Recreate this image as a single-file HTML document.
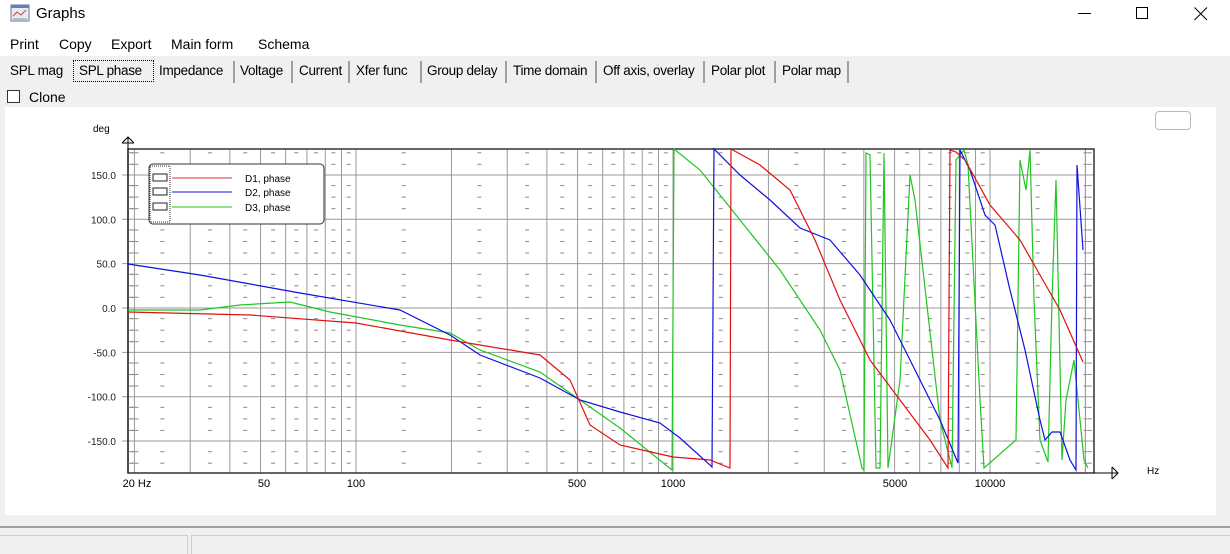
<!DOCTYPE html>
<html><head><meta charset="utf-8"><style>
*{margin:0;padding:0;box-sizing:border-box}
body{width:1230px;height:554px;background:#f0f0f0;font-family:"Liberation Sans",sans-serif;position:relative;overflow:hidden}
.abs{position:absolute}
#title{left:0;top:0;width:1230px;height:30px;background:#fff}
#menu{left:0;top:30px;width:1230px;height:26px;background:#fff;font-size:14px}
#menu span{position:absolute;top:6px}
.tab{position:absolute;top:61px;height:22px;font-size:13.5px;letter-spacing:-0.3px;line-height:20px;padding-left:4px;border-right:2px solid #a0a0a0;color:#000;white-space:nowrap;overflow:hidden}
#panel{left:5px;top:107px;width:1211px;height:408px;background:#fff}
svg text{font-family:"Liberation Sans",sans-serif}
</style></head><body>
<div id="title" class="abs">
 <svg class="abs" style="left:10px;top:4px" width="22" height="20"><rect x="1" y="1" width="18" height="16" fill="#e8ecf4" stroke="#6a7a9a"/><rect x="1" y="1" width="18" height="3" fill="#6080c0"/><path d="M3 12 L7 8 L11 11 L16 6" stroke="#c04040" fill="none"/><path d="M3 15h14" stroke="#888"/></svg>
 <span class="abs" style="left:36px;top:5px;font-size:15px">Graphs</span>
 <div class="abs" style="left:1078px;top:13px;width:13px;height:1px;background:#000"></div>
 <div class="abs" style="left:1136px;top:7px;width:12px;height:12px;border:1px solid #000"></div>
 <svg class="abs" style="left:1194px;top:7px" width="14" height="14"><path d="M0.5 0.5L13 13M13 0.5L0.5 13" stroke="#000"/></svg>
</div>
<div id="menu" class="abs"><span style="left:10px">Print</span><span style="left:59px">Copy</span><span style="left:111px">Export</span><span style="left:171px">Main form</span><span style="left:258px">Schema</span></div>
<div class="tab" style="left:6px;width:66px;border-right:none">SPL mag</div>
<div class="tab" style="left:73px;width:81px;border:1px dotted #000;top:60px;height:22px;padding-left:5px">SPL phase</div>
<div class="tab" style="left:155px;width:80px">Impedance</div>
<div class="tab" style="left:236px;width:57px">Voltage</div>
<div class="tab" style="left:295px;width:55px">Current</div>
<div class="tab" style="left:352px;width:70px">Xfer func</div>
<div class="tab" style="left:423px;width:84px">Group delay</div>
<div class="tab" style="left:509px;width:88px">Time domain</div>
<div class="tab" style="left:599px;width:106px">Off axis, overlay</div>
<div class="tab" style="left:707px;width:69px">Polar plot</div>
<div class="tab" style="left:778px;width:71px">Polar map</div>
<div class="abs" style="left:7px;top:90px;width:13px;height:13px;border:1px solid #333;background:#fff"></div>
<span class="abs" style="left:29px;top:89px;font-size:14px">Clone</span>
<div id="panel" class="abs"></div>
<div class="abs" style="left:1155px;top:111px;width:36px;height:19px;border:1px solid #bbb;border-radius:4px;background:#fff"></div>
<div class="abs" style="left:0;top:526px;width:1230px;height:2px;background:#a0a0a0"></div>
<div class="abs" style="left:0;top:535px;width:188px;height:19px;border-top:1px solid #ccc;border-right:1px solid #ccc"></div>
<div class="abs" style="left:191px;top:535px;width:1039px;height:19px;border-top:1px solid #ccc;border-left:1px solid #ccc"></div>
<svg id="g" class="abs" style="left:0;top:0" width="1230" height="554"></svg>
<script>
var s='',L=128,R=1094,T=149,B=473;
function fx(f){return 356+317*Math.log10(f/100);}
function fy(d){return 308-0.887*d;}
var xs=[];
[10,100,1000,10000].forEach(function(dec){for(var m=1;m<10;m++){var f=dec*m;if(f>=20&&f<=20000)xs.push(fx(f));}});
xs.push(fx(20000));
var cols=[L].concat(xs.filter(function(x){return x>L+3&&x<R-3}),[R]);
var ds=[];for(var b=-200;b<200;b+=50){[12,25,38].forEach(function(o){ds.push(b+o);});}
for(var i=0;i<cols.length-1;i++){var mx=(cols[i]+cols[i+1])/2;ds.forEach(function(d){var y=fy(d);if(y<T+3||y>B-3)return;s+='<line x1="'+(mx-2)+'" x2="'+(mx+2)+'" y1="'+y+'" y2="'+y+'" stroke="#888"/>';});}
ds.forEach(function(d){var y=fy(d);if(y<T+3||y>B-3)return;s+='<line x1="'+(fx(20)-4)+'" x2="'+(fx(20)+4)+'" y1="'+y+'" y2="'+y+'" stroke="#888"/>';});
cols.forEach(function(x){s+='<line x1="'+x+'" x2="'+x+'" y1="'+T+'" y2="'+B+'" stroke="#999"/>';});
for(var d=-150;d<=150;d+=50){var y=fy(d);s+='<line x1="'+(L-6)+'" x2="'+R+'" y1="'+y+'" y2="'+y+'" stroke="#999"/>';s+='<text x="'+(L-12)+'" y="'+(y+4)+'" font-size="10" text-anchor="end" fill="#222">'+d.toFixed(1)+'</text>';}
s+='<rect x="'+L+'" y="'+T+'" width="'+(R-L)+'" height="'+(B-T)+'" fill="none" stroke="#333" stroke-width="1.5"/>';
s+='<path d="M128 473V138M122 143L128 137L134 143M122 143h12" stroke="#000" fill="none"/>';
s+='<path d="M1094 473H1118M1112 467L1118 473L1112 479M1112 467v12" stroke="#000" fill="none"/>';
s+='<text x="93" y="132" font-size="10">deg</text><text x="1147" y="474" font-size="10">Hz</text>';
[['20 Hz',137],['50',264],['100',356],['500',577],['1000',673],['5000',895],['10000',990]].forEach(function(a){s+='<text x="'+a[1]+'" y="487" font-size="11" text-anchor="middle">'+a[0]+'</text>';});
function pl(p,c){s+='<polyline points="'+p+'" fill="none" stroke="'+c+'" stroke-width="1.2"/>';}
pl('128,310 200,310 240,305 290,302 330,312 400,325 450,333 480,350 540,372 580,400 620,428 672,470 674,149 700,170 740,220 780,270 820,330 840,370 862,468 864,470 866,153 870,155 876,468 880,468 884,153 888,468 900,380 910,175 915,200 940,420 952,468 956,160 964,150 968,165 980,400 984,468 1016,440 1020,160 1026,190 1030,150 1034,300 1040,440 1048,462 1052,300 1056,180 1062,460 1066,400 1074,360 1084,460 1088,468','#22c422');
pl('128,264 200,275 300,293 400,310 450,335 480,355 540,378 580,400 620,412 660,423 680,438 710,465 712,467 714,149 740,175 770,200 800,228 830,240 860,275 890,320 920,380 940,420 958,463 960,150 970,170 985,215 995,225 1010,290 1025,350 1040,420 1045,440 1052,432 1060,432 1070,460 1076,470 1077,165 1083,250','#1010e0');
pl('128,312 250,315 356,323 450,340 540,355 570,380 590,425 620,445 673,457 710,460 730,468 731,149 760,165 790,190 815,240 840,300 870,360 900,400 930,440 948,468 950,150 956,152 965,160 990,205 1020,240 1040,275 1060,310 1083,362','#e01010');
s+='<rect x="149" y="164" width="175" height="60" rx="4" fill="#fff" stroke="#333"/>';
s+='<rect x="150" y="166" width="20" height="56" fill="none" stroke="#333" stroke-dasharray="1,1"/>';
[['D1, phase','#e03030',178],['D2, phase','#1010e0',192],['D3, phase','#20c020',207]].forEach(function(a){s+='<rect x="153" y="'+(a[2]-4)+'" width="14" height="7" fill="none" stroke="#222"/><line x1="172" x2="232" y1="'+a[2]+'" y2="'+a[2]+'" stroke="'+a[1]+'"/><text x="245" y="'+(a[2]+4)+'" font-size="10">'+a[0]+'</text>';});
document.getElementById('g').innerHTML=s;
</script>
</body></html>
